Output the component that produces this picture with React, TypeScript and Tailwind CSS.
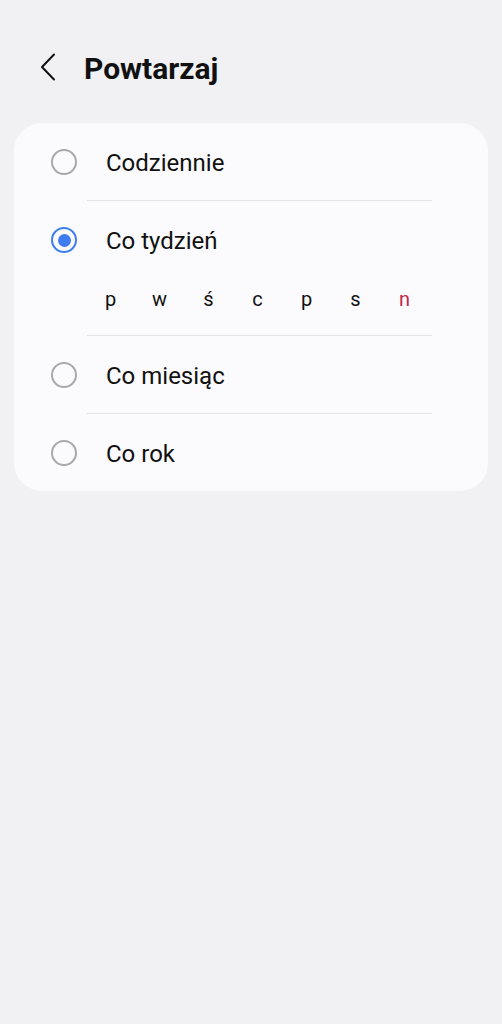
const DAYS: { label: string; red?: boolean }[] = [
  { label: 'p' },
  { label: 'w' },
  { label: 'ś' },
  { label: 'c' },
  { label: 'p' },
  { label: 's' },
  { label: 'n', red: true },
]

function Radio({ checked }: { checked?: boolean }) {
  if (checked) {
    return (
      <span className="flex h-[26px] w-[26px] items-center justify-center rounded-full border-[2.5px] border-[#3e7cf0]">
        <span className="h-[13px] w-[13px] rounded-full bg-[#3e7cf0]" />
      </span>
    )
  }
  return <span className="h-[26px] w-[26px] rounded-full border-2 border-[#a9a9ab]" />
}

function Row({ label, checked }: { label: string; checked?: boolean }) {
  return (
    <div className="flex h-[77px] items-center pl-[37px]">
      <Radio checked={checked} />
      <span className="ml-[29px] pt-[2px] text-[24px] text-[#111]">{label}</span>
    </div>
  )
}

function Divider() {
  return <div className="ml-[73px] mr-[56px] h-px bg-[#e2e2e4]" />
}

export default function App() {
  return (
    <div className="min-h-[1024px] w-full bg-[#f1f1f3] pt-[44px] font-['Roboto',sans-serif]">
      <header className="flex h-[46px] items-center">
        <button className="ml-[40px] flex h-[46px] w-[20px] items-center">
          <svg width="16" height="28" viewBox="0 0 16 28" fill="none">
            <polyline
              points="14,1.5 2,14 14,26.5"
              stroke="#111"
              strokeWidth="2"
              strokeLinecap="round"
              strokeLinejoin="round"
            />
          </svg>
        </button>
        <h1 className="ml-[24px] pt-[2px] text-[30px] font-bold text-[#111]">Powtarzaj</h1>
      </header>

      <div className="mx-[14px] mt-[33px] overflow-hidden rounded-[28px] bg-[#fbfbfd]">
        <Row label="Codziennie" />
        <Divider />
        <div className="flex h-[78px] items-center pl-[37px]">
          <Radio checked />
          <span className="ml-[29px] pt-[2px] text-[24px] text-[#111]">Co tydzień</span>
        </div>
        <div className="flex h-[56px] items-start pl-[72px] pt-[8px]">
          {DAYS.map(({ label, red }, i) => (
            <span
              key={i}
              className={`w-[49px] text-center text-[20px] leading-[24px] ${red ? 'text-[#c4264f]' : 'text-[#111]'}`}
            >
              {label}
            </span>
          ))}
        </div>
        <Divider />
        <Row label="Co miesiąc" />
        <Divider />
        <Row label="Co rok" />
      </div>
    </div>
  )
}
